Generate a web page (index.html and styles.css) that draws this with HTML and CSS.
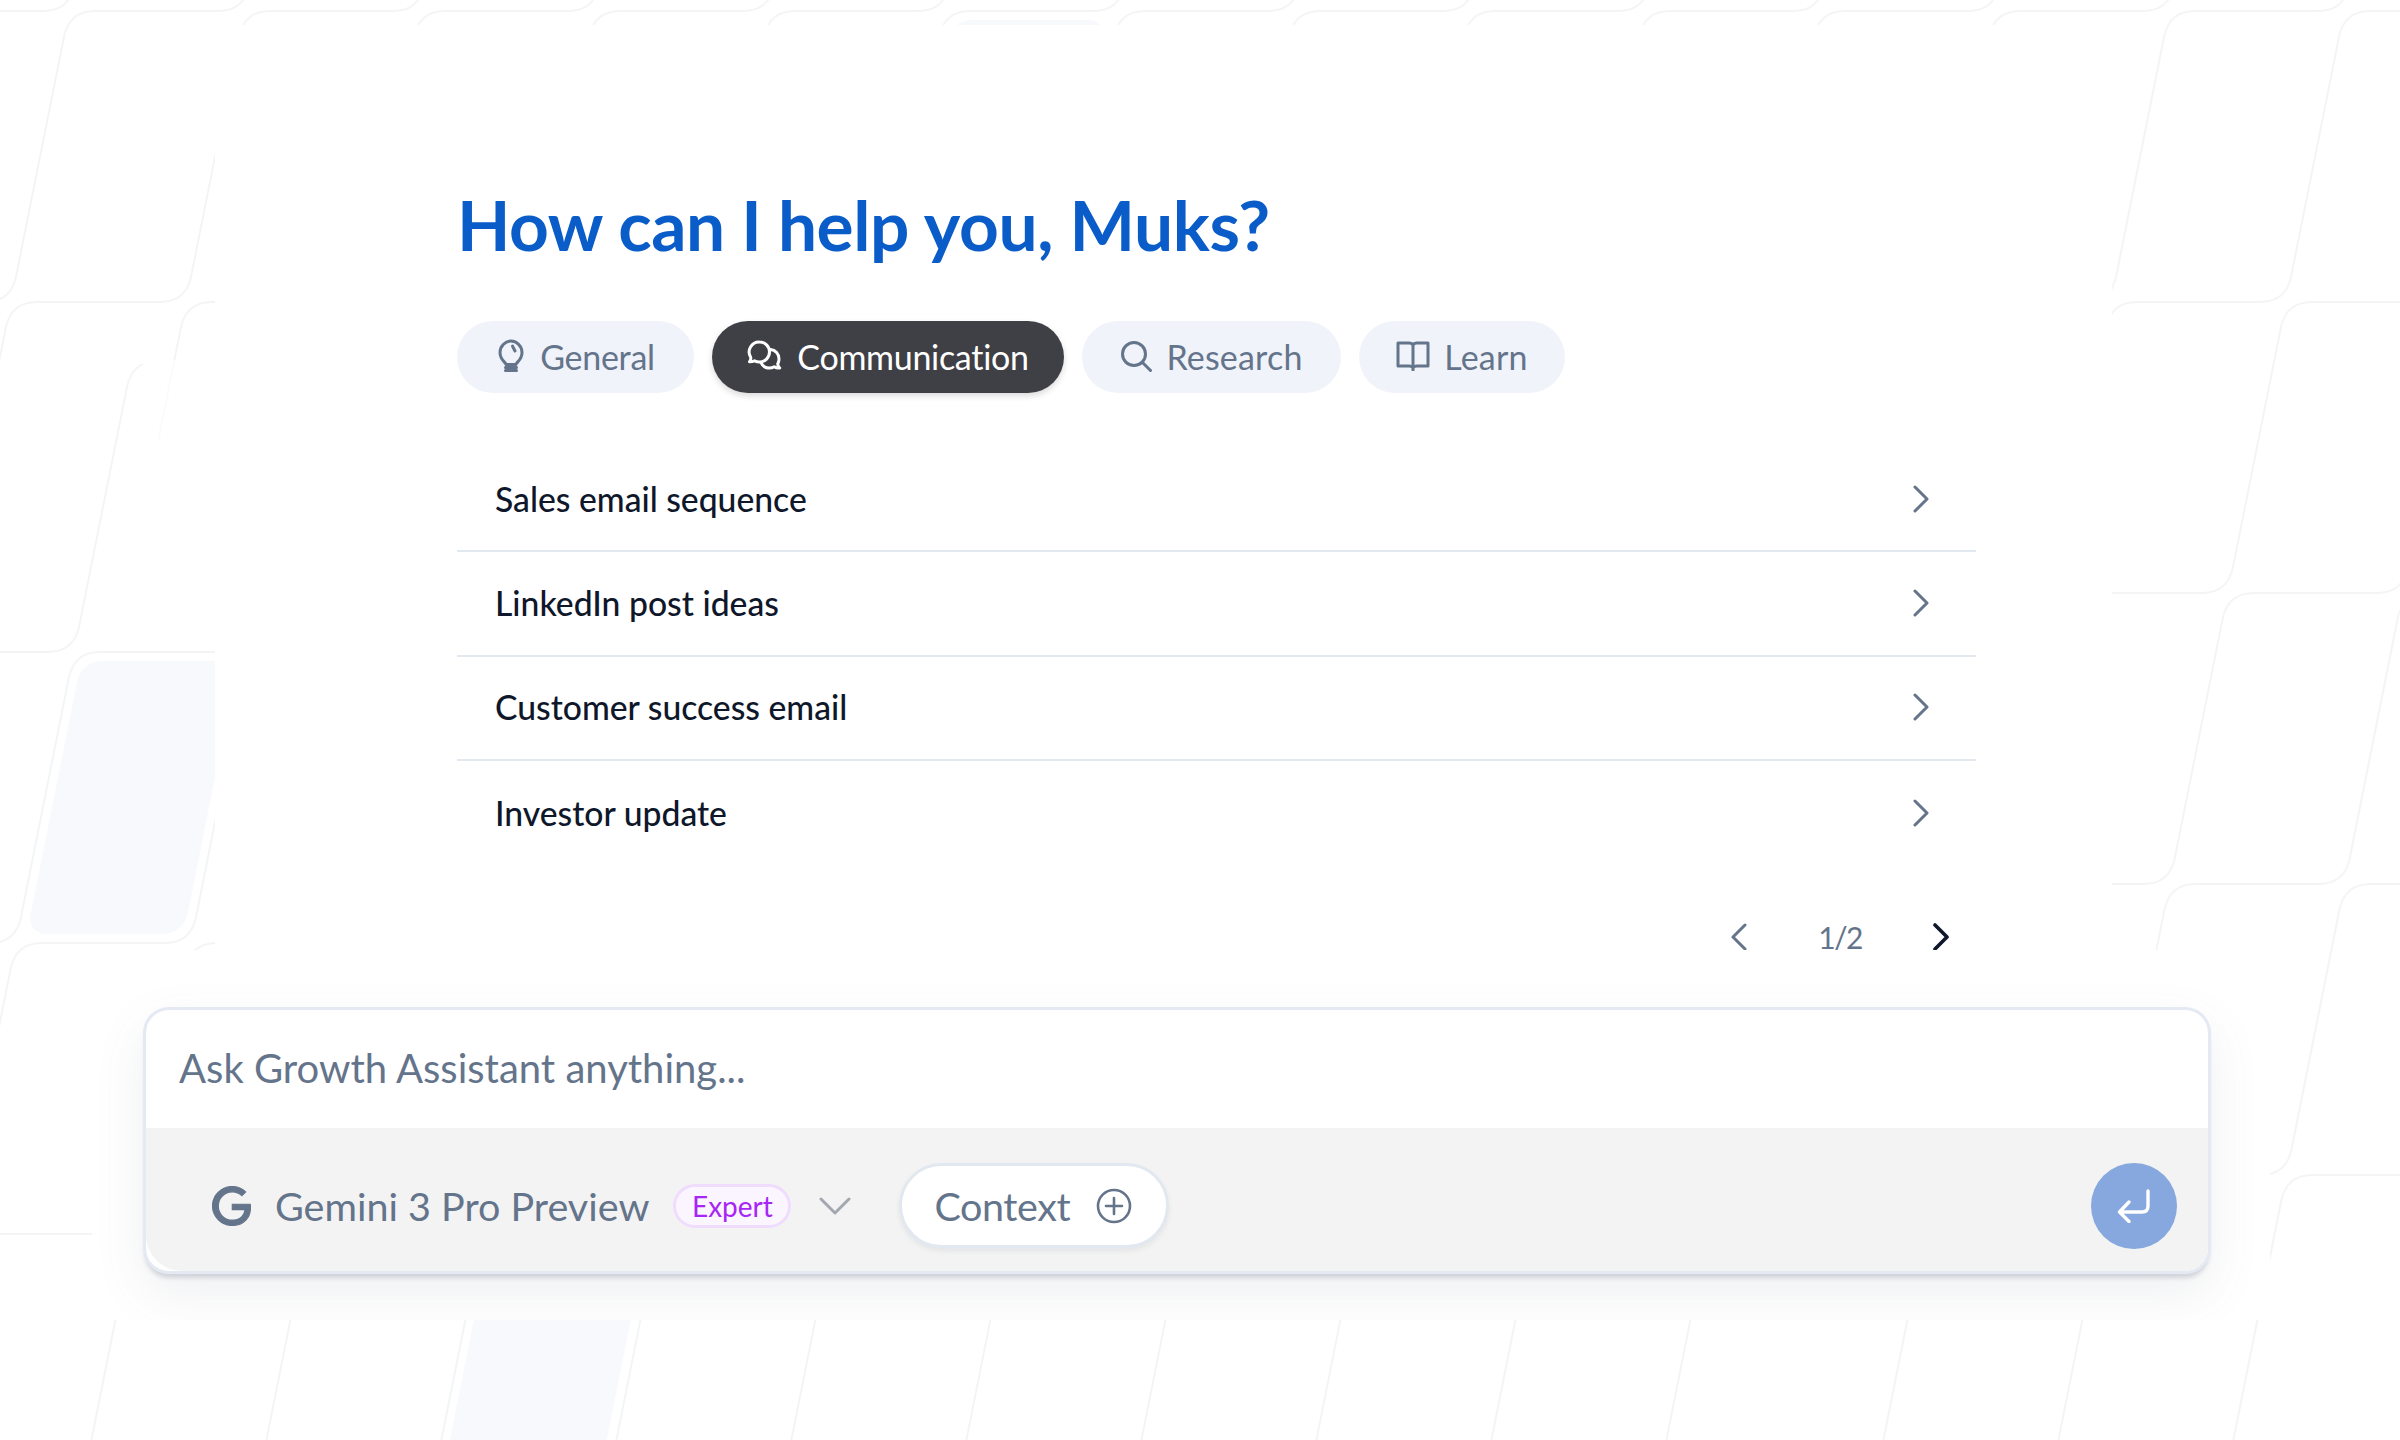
FILE: index.html
```html
<!DOCTYPE html>
<html lang="en">
<head>
    <meta charset="UTF-8">
    <title>Growth Assistant</title>
    <link rel="stylesheet" href="styles.css">
</head>
<body>
    <!-- slanted tile pattern behind the page -->
    <svg class="backdrop" width="2400" height="1440" viewBox="0 0 2400 1440">
        <defs>
            <pattern id="tiles-a" width="175" height="291" patternUnits="userSpaceOnUse" patternTransform="translate(-47 157) skewX(-11.31)">
                <path class="tile-line" d="M87 0V119Q87 145 61 145H0M175 145H113Q87 145 87 171V291"/>
            </pattern>
            <pattern id="tiles-b" width="175" height="291" patternUnits="userSpaceOnUse" patternTransform="translate(16 507) skewX(-11.31)">
                <path class="tile-line" d="M87 0V119Q87 145 61 145H0M175 145H113Q87 145 87 171V291"/>
            </pattern>
        </defs>
        <rect x="0" y="0" width="2400" height="360" fill="url(#tiles-a)"/>
        <rect class="tile-faint" x="100" y="360" width="115" height="80" fill="url(#tiles-a)"/>
        <rect x="1800" y="360" width="600" height="1080" fill="url(#tiles-a)"/>
        <rect x="0" y="364" width="1800" height="1076" fill="url(#tiles-b)"/>
        <g transform="translate(74 652) skewX(-11.31)"><rect class="tile-fill" x="9" y="9" width="157" height="273" rx="20"/></g>
        <g transform="translate(482 1234) skewX(-11.31)"><rect class="tile-fill" x="9" y="9" width="157" height="273" rx="20"/></g>
        <g transform="translate(944 11) skewX(-11.31)"><rect class="tile-fill" x="9" y="9" width="157" height="273" rx="20"/></g>
    </svg>

    <main class="upper">
        <h1 class="title">How can I help you, Muks?</h1>

        <div class="tabs">
            <div class="tab tab-general">
                <svg class="tab-icon" width="30" height="34" viewBox="0 0 30 34"><path d="M10 25.500c-.5-2.500-6-4.500-6-12C4 7.300 9 2 15 2s11 5.300 11 11.500c0 7.500-5.500 9.500-6 12z"/><path d="M16.500 7l2.500 5"/><path d="M9.500 28.500h11M9.500 31.500h11"/></svg>
                General
            </div>
            <div class="tab tab-active tab-communication">
                <svg class="tab-icon" width="36" height="32" viewBox="0 0 36 32"><path d="M12.500 2a10 10 0 0 1 0 20c-1.800 0-3.500-.5-5-1.200-1.500.7-3 1-5 1 1-1.200 1.500-3 1.200-4.500A10 10 0 0 1 12.500 2z"/><path d="M23.500 9.500C28.500 10 32 14 32 19c0 2-.5 3.500-1.300 5 .2 1.500 1 3 2 4-2 .2-4-.2-5.500-1.200-1.500.9-3 1.300-4.700 1.300-4 0-7-2.200-8.500-5.500"/></svg>
                Communication
            </div>
            <div class="tab tab-research">
                <svg class="tab-icon" width="32" height="32" viewBox="0 0 32 32"><circle cx="14" cy="14" r="11.500"/><path d="M22.500 22.500l8 8"/></svg>
                Research
            </div>
            <div class="tab tab-learn">
                <svg class="tab-icon" width="34" height="30" viewBox="0 0 34 30"><path d="M2 2h11c1.800 0 3.300.7 4 2 .7-1.300 2.200-2 4-2h11v23H21c-1.800 0-3.300.5-4 2-.7-1.500-2.200-2-4-2H2zM17 4v25"/></svg>
                Learn
            </div>
        </div>

        <div class="prompts">
            <div class="prompt">Sales email sequence
                <svg class="chevron" width="16" height="28" viewBox="0 0 16 28"><path d="M2 2l12 12L2 26"/></svg>
            </div>
            <div class="prompt">LinkedIn post ideas
                <svg class="chevron" width="16" height="28" viewBox="0 0 16 28"><path d="M2 2l12 12L2 26"/></svg>
            </div>
            <div class="prompt">Customer success email
                <svg class="chevron" width="16" height="28" viewBox="0 0 16 28"><path d="M2 2l12 12L2 26"/></svg>
            </div>
            <div class="prompt">Investor update
                <svg class="chevron" width="16" height="28" viewBox="0 0 16 28"><path d="M2 2l12 12L2 26"/></svg>
            </div>
        </div>

        <div class="pager">
            <svg class="chevron" width="16" height="28" viewBox="0 0 16 28"><path d="M14 2L2 14l12 12"/></svg>
            <span class="pager-count">1/2</span>
            <svg class="chevron chevron-dark" width="16" height="28" viewBox="0 0 16 28"><path d="M2 2l12 12L2 26"/></svg>
        </div>
    </main>

    <section class="lower">
        <div class="composer">
            <div class="composer-input">Ask Growth Assistant anything...</div>
            <div class="composer-bar">
                <svg class="google" width="39" height="40" viewBox="0 0 24 24"><path d="M12.480 10.920v3.280h7.840c-.240 1.840-.853 3.187-1.787 4.133-1.147 1.147-2.933 2.400-6.053 2.400-4.827 0-8.600-3.893-8.600-8.720s3.773-8.720 8.600-8.720c2.600 0 4.507 1.027 5.907 2.347l2.307-2.307C18.747 1.440 16.133 0 12.480 0 5.867 0 .307 5.387.307 12s5.560 12 12.173 12c3.573 0 6.267-1.173 8.373-3.360 2.160-2.160 2.840-5.213 2.840-7.667 0-.760-.053-1.467-.173-2.053H12.480z"/></svg>
                <span class="model-name">Gemini 3 Pro Preview</span>
                <span class="badge">Expert</span>
                <svg class="model-caret" width="32" height="18" viewBox="0 0 32 18"><path d="M2 2l14 14L30 2"/></svg>
                <div class="context">
                    Context
                    <svg class="context-plus" width="36" height="36" viewBox="0 0 36 36"><circle cx="18" cy="18" r="16"/><path d="M18 10v16M10 18h16"/></svg>
                </div>
                <div class="send">
                    <svg width="34" height="34" viewBox="0 0 34 34"><path d="M31 2v15c0 4-2 6-6 6H3M12 13L2.500 23l9.500 9.500"/></svg>
                </div>
            </div>
        </div>
    </section>
</body>
</html>
```

FILE: styles.css
```css
:root {
    --slate: #64748b;
    --ink: #0f172a;
    --line: #e2e8f0;
}

* {
    box-sizing: border-box;
}

body {
    margin: 0;
    position: relative;
    width: 2400px;
    height: 1440px;
    overflow: hidden;
    background: #fff;
    font-family: Lato, "Noto Sans", sans-serif;
    color: var(--ink);
}

.backdrop {
    position: absolute;
    top: 0;
    left: 0;
}

.tile-line {
    fill: none;
    stroke: #f3f4f6;
    stroke-width: 2;
}

.tile-faint {
    opacity: 0.4;
}

.tile-fill {
    fill: #f8f9fd;
}

.upper {
    position: relative;
    width: 1897px;
    height: 925px;
    margin: 25px 0 0 215px;
    padding: 160px 0 0 242px;
    background: #fff;
}

.title {
    margin: 0 0 56px;
    font-size: 69.4px;
    line-height: 80px;
    font-weight: 700;
    letter-spacing: -0.4px;
    color: #0a5cc8;
}

.tabs {
    display: flex;
    gap: 18px;
    margin-bottom: 55px;
}

.tab {
    display: flex;
    align-items: center;
    justify-content: center;
    height: 72px;
    gap: 14px;
    padding-bottom: 2px;
    border-radius: 36px;
    background: #f0f3f9;
    font-size: 34px;
    color: var(--slate);
}

.tab-general { width: 237px; letter-spacing: -0.3px; }
.tab-communication { width: 352px; letter-spacing: -0.3px; }
.tab-research { width: 259px; letter-spacing: 0.2px; }
.tab-learn { width: 206px; letter-spacing: 0.2px; }

.tab-active {
    background: #3f3f46;
    color: #fff;
    box-shadow: 0 3px 6px rgba(0, 0, 0, 0.15);
}

.tab-icon {
    fill: none;
    stroke: currentColor;
    stroke-width: 3;
    stroke-linecap: round;
    stroke-linejoin: round;
}

.prompts {
    width: 1519px;
}

.prompt {
    display: flex;
    align-items: center;
    justify-content: space-between;
    height: 104.33px;
    padding: 0 47px 1px 38px;
    border-bottom: 2px solid var(--line);
    font-size: 33.7px;
    font-weight: 500;
}

.prompt:last-child {
    border-bottom: none;
}

.chevron {
    fill: none;
    stroke: var(--slate);
    stroke-width: 3;
    stroke-linecap: round;
    stroke-linejoin: round;
}

.chevron-dark {
    stroke: var(--ink);
    stroke-width: 3.6;
}

.pager {
    display: flex;
    align-items: center;
    justify-content: flex-end;
    gap: 71px;
    width: 1519px;
    height: 52px;
    margin-top: 46px;
    padding-right: 27px;
}

.pager-count {
    font-size: 30px;
    letter-spacing: -1.5px;
    color: var(--slate);
}

.lower {
    position: relative;
    width: 2178px;
    height: 370px;
    margin-left: 92px;
    padding: 57px 0 0 51px;
    overflow: hidden;
    background: #fff;
}

.composer {
    width: 2068px;
    height: 267px;
    border: 3px solid #e4e9f3;
    border-radius: 26px;
    background: #fff;
    box-shadow: 0 6px 4px -2px rgba(100, 110, 130, 0.24), 0 20px 50px rgba(100, 110, 130, 0.1);
}

.composer-input {
    display: flex;
    align-items: center;
    height: 118px;
    padding: 0 0 2px 33px;
    border-radius: 23px 23px 0 0;
    font-size: 40px;
    color: var(--slate);
}

.composer-bar {
    display: flex;
    align-items: center;
    height: 143px;
    padding: 12px 31px 0 66px;
    border-radius: 0 0 23px 36px;
    background: #f3f3f3;
}

.google {
    fill: var(--slate);
    stroke: var(--slate);
    stroke-width: 0.7;
    margin-right: 24px;
}

.model-name {
    margin-right: 24px;
    font-size: 39.5px;
    color: var(--slate);
}

.badge {
    display: flex;
    align-items: center;
    justify-content: center;
    width: 118px;
    height: 44px;
    margin-right: 28px;
    border: 3px solid #f0dcfd;
    border-radius: 22px;
    background: #faf5ff;
    font-size: 28px;
    color: #a726f5;
}

.model-caret {
    fill: none;
    stroke: #a3a8b0;
    stroke-width: 3;
    stroke-linecap: round;
    stroke-linejoin: round;
    margin-right: 48px;
}

.context {
    display: flex;
    align-items: center;
    gap: 26px;
    width: 270px;
    height: 85px;
    padding-left: 32px;
    border: 3px solid var(--line);
    border-radius: 43px;
    background: #fff;
    font-size: 39.5px;
    letter-spacing: -0.4px;
    color: var(--slate);
    box-shadow: 0 3px 5px rgba(100, 110, 130, 0.1);
}

.context-plus {
    fill: none;
    stroke: var(--slate);
    stroke-width: 2.6;
    stroke-linecap: round;
}

.send {
    display: flex;
    align-items: center;
    justify-content: center;
    width: 86px;
    height: 86px;
    margin-left: auto;
    border-radius: 50%;
    background: #87a7df;
}

.send svg {
    fill: none;
    stroke: #fff;
    stroke-width: 3.4;
    stroke-linecap: round;
    stroke-linejoin: round;
}
```
